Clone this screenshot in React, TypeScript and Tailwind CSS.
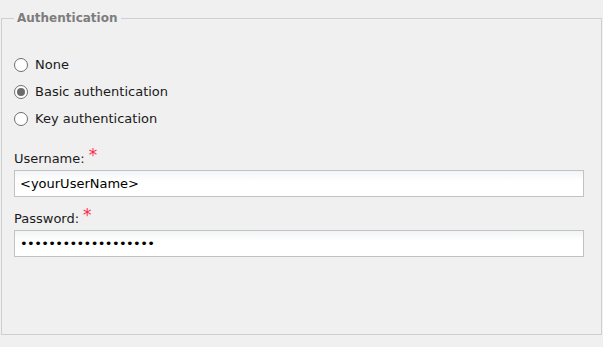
import { useState } from 'react';

type AuthMode = 'none' | 'basic' | 'key';

const options: { id: AuthMode; label: string }[] = [
  { id: 'none', label: 'None' },
  { id: 'basic', label: 'Basic authentication' },
  { id: 'key', label: 'Key authentication' },
];

function Radio({ checked }: { checked: boolean }) {
  return (
    <span className="flex h-[14px] w-[14px] shrink-0 items-center justify-center rounded-full border border-[#6e6e6e] bg-white">
      {checked && <span className="h-[8px] w-[8px] rounded-full bg-[#6b6b6b]" />}
    </span>
  );
}

function Field({ label, value, secret }: { label: string; value: string; secret?: boolean }) {
  return (
    <div className="flex flex-col">
      <div className="flex h-[20px] items-start">
        <span className="leading-[20px]">{label}</span>
        <span className="ml-[4px] mt-[-4px] text-[17px] leading-[20px] text-[#ff2b4a]">*</span>
      </div>
      <input
        readOnly
        value={value}
        className={
          'mt-[1px] h-[27px] w-[570px] border border-[#c2c2c2] bg-gradient-to-b from-[#f2f4f5] to-white to-[40%] px-[5px] text-[13px] text-black outline-none ' +
          (secret ? 'tracking-[-0.6px]' : '')
        }
        style={{ fontFamily: 'inherit' }}
      />
    </div>
  );
}

export default function App() {
  const [mode, setMode] = useState<AuthMode>('basic');

  return (
    <div
      className="h-[347px] w-[603px] bg-[#f0f0f0] pt-[10px] text-[13px] text-[#1a1a1a]"
      style={{ fontFamily: '"DejaVu Sans", sans-serif' }}
    >
      <fieldset className="ml-px h-[325px] w-[601px] border border-[#cfcfcf] px-[12px]">
        <legend className="px-[3px] text-[12px] font-bold leading-[17px] text-[#7d7d7d]">
          Authentication
        </legend>

        {/* Auth mode */}
        <div className="mt-[31px] flex flex-col gap-[13px]">
          {options.map((o) => (
            <label key={o.id} className="flex h-[14px] items-center gap-[7px]" onClick={() => setMode(o.id)}>
              <Radio checked={mode === o.id} />
              <span>{o.label}</span>
            </label>
          ))}
        </div>

        <div className="mt-[23px] flex flex-col gap-[12px]">
          <Field label="Username:" value="<yourUserName>" />
          <Field label="Password:" value={'\u2022'.repeat(19)} secret />
        </div>
      </fieldset>
    </div>
  );
}
